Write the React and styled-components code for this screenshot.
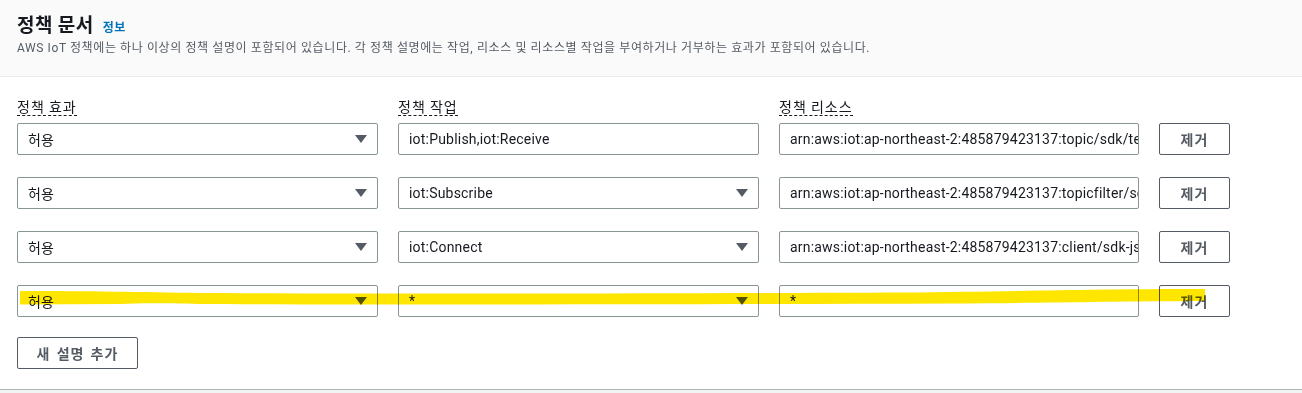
import React from 'react'
import styled, { createGlobalStyle } from 'styled-components'

const GlobalStyle = createGlobalStyle`
  body {
    margin: 0;
    background: #f2f3f3;
    font-family: Roboto, "Noto Sans CJK KR", sans-serif;
    color: #16191f;
  }
`

const Page = styled.div`
  position: relative;
  width: 1302px;
  height: 393px;
  overflow: hidden;
`

const Panel = styled.div`
  background: #fff;
  border-bottom: 1px solid #aab7b8;
`

const Header = styled.div`
  background: #fafafa;
  border-bottom: 1px solid #eaeded;
  padding: 12px 17px 0;
  height: 64px;
`

const TitleRow = styled.div`
  display: flex;
  align-items: baseline;
  gap: 9px;
`

const Title = styled.h2`
  margin: 0;
  font-size: 19px;
  font-weight: 700;
  line-height: 24px;
  letter-spacing: 0.5px;
  font-family: "Noto Sans CJK KR", sans-serif;
`

const InfoLink = styled.a`
  font-size: 12px;
  font-weight: 700;
  color: #0073bb;
  text-decoration: none;
  letter-spacing: 0.5px;
  font-family: "Noto Sans CJK KR", sans-serif;
`

const Description = styled.p`
  margin: 3px 0 0;
  font-size: 12px;
  line-height: 18px;
  color: #545b64;
  letter-spacing: 0.6px;
`

const Body = styled.div`
  padding: 20px 0 20px 17px;
`

const Grid = styled.div`
  display: grid;
  grid-template-columns: 361px 361px 360px 71px;
  column-gap: 20px;
  row-gap: 22px;
`

const LabelRow = styled.div`
  display: contents;
`

const Label = styled.span`
  justify-self: start;
  font-size: 14px;
  line-height: 18px;
  margin-bottom: -15px;
  letter-spacing: 1px;
  border-bottom: 1px dashed #16191f;
  font-family: "Noto Sans CJK KR", sans-serif;
`

const Field = styled.div`
  position: relative;
  height: 32px;
  box-sizing: border-box;
  border: 1px solid #879596;
  border-radius: 2px;
  background: #fff;
  display: flex;
  align-items: center;
  padding: 0 10px;
  font-size: 14px;
  letter-spacing: 0.2px;
  white-space: nowrap;
  overflow: hidden;
`

const Arrow = styled.span`
  margin-left: auto;
  flex-shrink: 0;
  width: 0;
  height: 0;
  border-left: 6px solid transparent;
  border-right: 6px solid transparent;
  border-top: 8px solid #545b64;
`

const Button = styled.button`
  height: 32px;
  width: ${p => p.$width || '71px'};
  box-sizing: border-box;
  border: 1px solid #545b64;
  border-radius: 2px;
  background: #fff;
  color: #545b64;
  font-size: 14px;
  font-weight: 700;
  letter-spacing: 1px;
  word-spacing: 2px;
  font-family: "Noto Sans CJK KR", sans-serif;
  padding: 0;
  cursor: pointer;
`

const Footer = styled.div`
  margin-top: 20px;
  height: 32px;
`

const Highlight = styled.svg`
  position: absolute;
  left: 0;
  top: 0;
  pointer-events: none;
  mix-blend-mode: multiply;
`

const rows = [
  { effect: '허용', action: 'iot:Publish,iot:Receive', select: false, resource: 'arn:aws:iot:ap-northeast-2:485879423137:topic/sdk/test/js' },
  { effect: '허용', action: 'iot:Subscribe', select: true, resource: 'arn:aws:iot:ap-northeast-2:485879423137:topicfilter/sdk/test/js' },
  { effect: '허용', action: 'iot:Connect', select: true, resource: 'arn:aws:iot:ap-northeast-2:485879423137:client/sdk-js-client' },
  { effect: '허용', action: '*', select: true, resource: '*' },
]

function App() {
  return (
    <Page>
      <GlobalStyle />
      <Panel>
        <Header>
          <TitleRow>
            <Title>정책 문서</Title>
            <InfoLink href="#">정보</InfoLink>
          </TitleRow>
          <Description>
            AWS IoT 정책에는 하나 이상의 정책 설명이 포함되어 있습니다. 각 정책 설명에는 작업, 리소스 및 리소스별 작업을 부여하거나 거부하는 효과가 포함되어 있습니다.
          </Description>
        </Header>
        <Body>
          <Grid>
            <LabelRow>
              <Label>정책 효과</Label>
              <Label>정책 작업</Label>
              <Label>정책 리소스</Label>
              <span />
            </LabelRow>
            {rows.map((r, i) => (
              <React.Fragment key={i}>
                <Field>{r.effect}<Arrow /></Field>
                <Field>{r.action}{r.select && <Arrow />}</Field>
                <Field>{r.resource}</Field>
                <Button>제거</Button>
              </React.Fragment>
            ))}
          </Grid>
          <Footer>
            <Button $width="121px">새 설명 추가</Button>
          </Footer>
        </Body>
      </Panel>
      <Highlight width="1302" height="393" viewBox="0 0 1302 393">
        <path
          d="M20 291 C 90 291, 140 292, 200 293 C 400 294, 700 293.5, 900 292.5 C 1020 291.5, 1080 289, 1205 289 L 1205 301 C 1100 301.5, 1040 303, 950 303.5 C 700 304.5, 400 305, 200 304 C 160 303, 140 303, 120 304 L 20 304.5 Z"
          fill="#ffe600"
        />
      </Highlight>
    </Page>
  )
}

export default App
